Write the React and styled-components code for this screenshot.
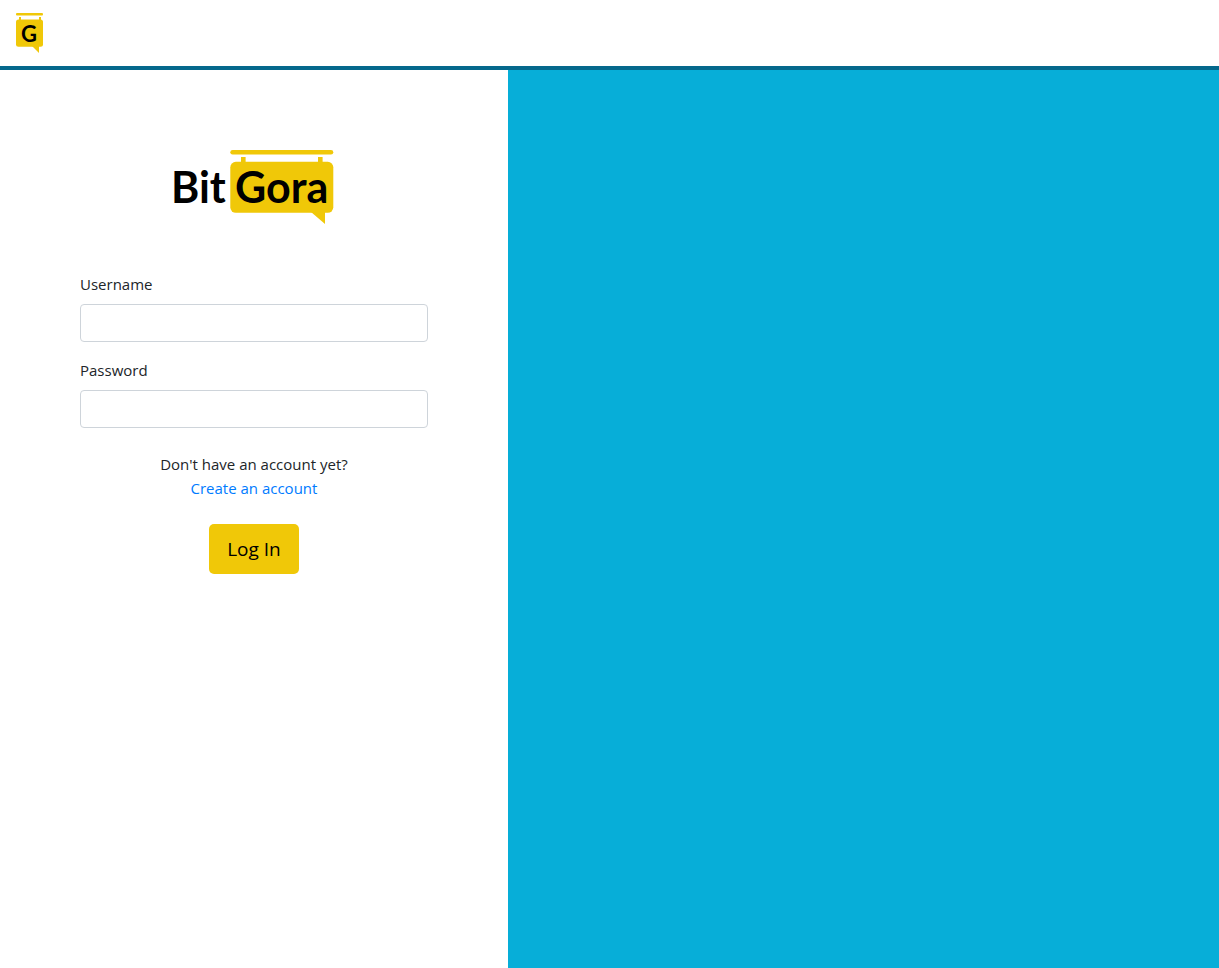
import React from "react";
import styled, { createGlobalStyle } from "styled-components";

const GlobalStyle = createGlobalStyle`
  *, *::before, *::after { box-sizing: border-box; }
  body {
    margin: 0;
    background: #fff;
    color: #212529;
    font-family: "Segoe UI", "Open Sans", "Noto Sans", sans-serif;
    font-size: 15px;
    line-height: 24px;
  }
`;

const Page = styled.div`
  display: flex;
  flex-direction: column;
  min-height: 100vh;
`;

const Header = styled.header`
  display: flex;
  align-items: center;
  height: 70px;
  padding: 0 16px;
  border-bottom: 4px solid #04688c;
`;

const HomeLink = styled.a`
  display: block;
  height: 40px;
`;

const Main = styled.main`
  display: grid;
  grid-template-columns: 5fr 7fr;
  flex: 1;
`;

const LoginPanel = styled.section`
  padding: 80px;
`;

const Cover = styled.div`
  background: #07aed8;
`;

const Brand = styled.div`
  display: flex;
  justify-content: center;
  margin-bottom: 48px;
`;

const Field = styled.div`
  margin-bottom: 16px;
`;

const Label = styled.label`
  display: block;
  margin-bottom: 8px;
`;

const TextInput = styled.input`
  display: block;
  width: 100%;
  height: 38px;
  padding: 6px 12px;
  border: 1px solid #ced4da;
  border-radius: 4px;
  background: #fff;
  color: #495057;
  font: inherit;
`;

const Prompt = styled.p`
  display: flex;
  flex-direction: column;
  align-items: center;
  margin: 24px 0;
`;

const AccountLink = styled.a`
  color: #007bff;
  text-decoration: none;
`;

const Actions = styled.div`
  display: flex;
  justify-content: center;
`;

const LoginButton = styled.button`
  height: 50px;
  padding: 0 18px;
  border: 0;
  border-radius: 5px;
  background: #f0c808;
  color: #000;
  font-family: inherit;
  font-size: 19px;
  cursor: pointer;
`;

const LogoText = styled.text`
  font-family: Lato, "Open Sans", sans-serif;
  font-size: ${(p) => p.$size}px;
  font-weight: 700;
  fill: #000;
`;

function LogoMark() {
  return (
    <svg width="27" height="40" viewBox="0 0 27 40" role="img" aria-label="BitGora home">
      <g fill="#f0c808">
        <rect width="27" height="2.4" rx="1" />
        <rect x="3" y="4" width="2" height="4" />
        <rect x="23" y="4" width="2" height="4" />
        <rect y="6.4" width="27" height="27.4" rx="2.5" />
        <path d="M16 33 H23 V40 Z" />
      </g>
      <LogoText $size={22} x="13" y="28.5" textAnchor="middle">G</LogoText>
    </svg>
  );
}

function Logo() {
  return (
    <svg width="170" height="74" viewBox="-4 0 170 74" role="img" aria-label="BitGora">
      <g fill="#f0c808">
        <rect x="57.3" width="103" height="4.6" rx="2.3" />
        <rect x="68" y="7" width="4.6" height="8" />
        <rect x="145" y="7" width="4.6" height="8" />
        <rect x="57.3" y="11.8" width="103" height="51" rx="5.5" />
        <path d="M138 62 H152 V74 Z" />
      </g>
      <LogoText $size={43} x="-2" y="53">Bit</LogoText>
      <LogoText $size={43} x="62" y="53">Gora</LogoText>
    </svg>
  );
}

export default function App() {
  return (
    <>
      <GlobalStyle />
      <Page>
        <Header>
          <HomeLink href="#"><LogoMark /></HomeLink>
        </Header>
        <Main>
          <LoginPanel>
            <Brand><Logo /></Brand>
            <form onSubmit={(e) => e.preventDefault()}>
              <Field>
                <Label htmlFor="username">Username</Label>
                <TextInput id="username" name="username" type="text" autoComplete="username" />
              </Field>
              <Field>
                <Label htmlFor="password">Password</Label>
                <TextInput id="password" name="password" type="password" autoComplete="current-password" />
              </Field>
              <Prompt>
                Don't have an account yet?
                <AccountLink href="#register">Create an account</AccountLink>
              </Prompt>
              <Actions>
                <LoginButton type="submit">Log In</LoginButton>
              </Actions>
            </form>
          </LoginPanel>
          <Cover />
        </Main>
      </Page>
    </>
  );
}
